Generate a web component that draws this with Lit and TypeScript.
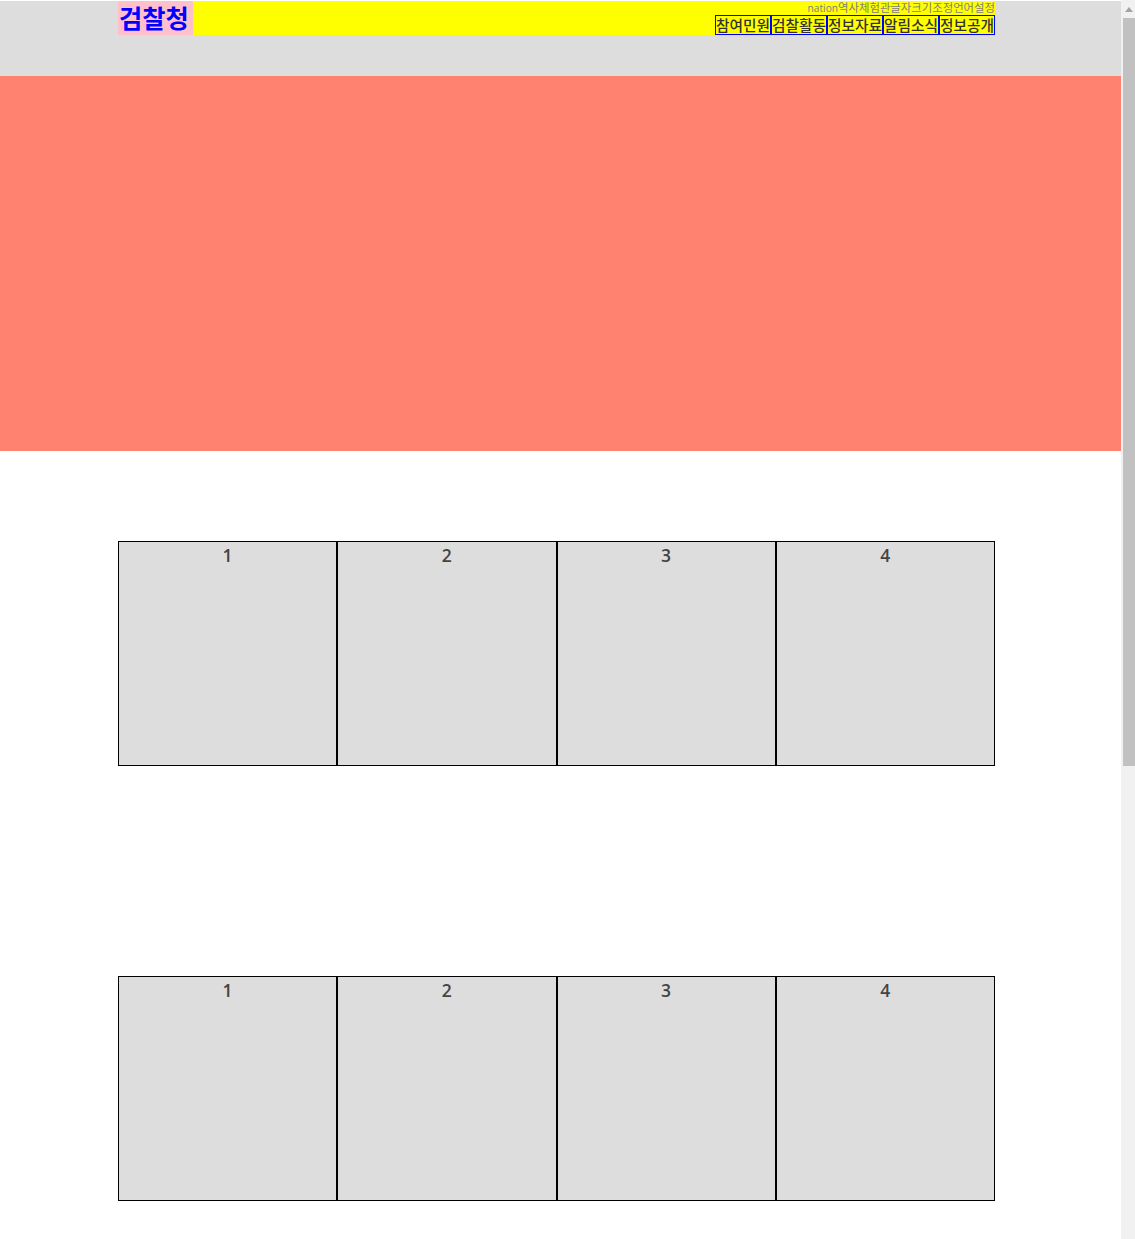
import { LitElement, html, css } from "lit";
import { customElement } from "lit/decorators.js";

@customElement("app-root")
export class AppRoot extends LitElement {
  static styles = css`
    :host { display: flex; width: 100%; height: 1239px; overflow: hidden; background: #fff; font-family: "Noto Sans CJK KR", "Noto Sans", sans-serif; }
    .page { flex: 1; min-width: 0; padding-top: 1px; }
    .header { height: 75px; background: #ddd; }
    .bar { width: 877px; height: 34px; margin-left: 118px; background: #ff0; display: flex; justify-content: space-between; }
    .logo { width: 75px; height: 34px; background: pink; color: #00f; font-size: 25.3px; font-weight: 700; line-height: 32px; padding-left: 1px; box-sizing: border-box; white-space: nowrap; }
    .right { display: flex; flex-direction: column; align-items: flex-end; }
    .util { height: 14px; font-size: 11.38px; line-height: 13px; color: #808080; white-space: nowrap; }
    .util .latin { font-family: "Open Sans", sans-serif; font-size: 10.2px; line-height: 1; }
    .nav { display: flex; }
    .nav span { width: 56px; height: 20px; box-sizing: border-box; border: 1px solid #00f; font-size: 14.67px; font-weight: 500; line-height: 18px; color: #333; text-align: center; white-space: nowrap; }
    .hero { height: 375px; background: #ff8170; }
    .grid { width: 877px; height: 225px; margin-left: 118px; display: grid; grid-template-columns: repeat(4, 1fr); }
    .grid.a { margin-top: 90px; }
    .grid.b { margin-top: 210px; }
    .cell { background: #ddd; border: 1px solid #000; text-align: center; font-family: "Open Sans", sans-serif; font-weight: 600; font-size: 17.5px; line-height: 26px; color: #444; }
    .scroll { width: 14px; flex: none; background: #f1f1f1; }
    .arrow { height: 18px; padding-left: 2px; display: flex; align-items: center; justify-content: center; }
    .thumb { height: 748px; background: #c1c1c1; margin-left: 2px; }
  `;

  private grid(cls: string) {
    return html`<div class="grid ${cls}">
      ${[1, 2, 3, 4].map((n) => html`<div class="cell">${n}</div>`)}
    </div>`;
  }

  render() {
    return html`
      <div class="page">
        <div class="header">
          <div class="bar">
            <div class="logo">검찰청</div>
            <div class="right">
              <div class="util"><span class="latin">nation</span>역사체험관글자크기조정언어설정</div>
              <div class="nav">
                ${["참여민원", "검찰활동", "정보자료", "알림소식", "정보공개"].map((t) => html`<span>${t}</span>`)}
              </div>
            </div>
          </div>
        </div>
        <div class="hero"></div>
        ${this.grid("a")}
        ${this.grid("b")}
      </div>
      <div class="scroll">
        <div class="arrow">
          <svg width="8" height="5" viewBox="0 0 8 5"><path d="M4 0 8 5H0Z" fill="#a3a3a3"/></svg>
        </div>
        <div class="thumb"></div>
      </div>
    `;
  }
}
